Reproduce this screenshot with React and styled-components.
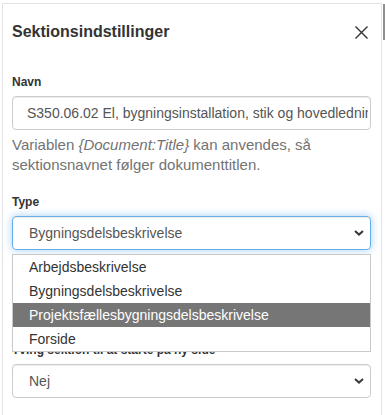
import React from "react";
import styled, { createGlobalStyle } from "styled-components";

const GlobalStyle = createGlobalStyle`
  html, body {
    margin: 0;
    padding: 0;
    background: #ffffff;
  }
  body {
    font-family: "Liberation Sans", Arial, sans-serif;
    color: #333333;
    overflow: hidden;
  }
  * {
    box-sizing: border-box;
  }
`;

const Page = styled.div`
  position: relative;
  width: 385px;
  height: 415px;
  padding: 3px 0 0 2px;
`;

const ScrollThumb = styled.div`
  position: absolute;
  left: 383px;
  top: 4px;
  width: 2px;
  height: 36px;
  background: #8f8f8f;
`;

const Panel = styled.div`
  width: 380px;
  height: 412px;
  border: 1px solid #e3e3e3;
  border-bottom: none;
  padding: 16px 9px 0 9px;
`;

const Header = styled.div`
  display: flex;
  align-items: center;
  justify-content: space-between;
  height: 24px;
`;

const Title = styled.h4`
  margin: 0;
  font-size: 16px;
  line-height: 24px;
  font-weight: 700;
  color: #333333;
`;

const CloseButton = styled.button`
  display: flex;
  align-items: center;
  justify-content: center;
  border: none;
  background: none;
  padding: 0;
  margin-right: 4px;
  width: 13px;
  height: 13px;
  cursor: pointer;
`;

const Body = styled.div`
  padding-top: 29px;
`;

const Group = styled.div`
  position: relative;
  margin-bottom: ${({ $gap }) => $gap || 15}px;
`;

const Label = styled.label`
  display: block;
  font-size: 12px;
  line-height: 18px;
  font-weight: 700;
  color: #333333;
  margin-bottom: 5px;
`;

const TextInput = styled.input`
  display: block;
  width: 359px;
  height: 34px;
  padding: 0 2px 0 14px;
  font-family: "Liberation Sans", Arial, sans-serif;
  font-size: 14px;
  color: #555555;
  border: 1px solid #cccccc;
  border-radius: 4px;
  outline: none;
  box-shadow: inset 0 1px 1px rgba(0, 0, 0, 0.075);
`;

const HelpText = styled.p`
  margin: 5px 0 0;
  font-size: 15px;
  line-height: 20px;
  color: #737373;
`;

const SelectBox = styled.div`
  display: flex;
  align-items: center;
  justify-content: space-between;
  width: 359px;
  height: 34px;
  padding: 0 6px 0 16px;
  font-size: 14px;
  color: #555555;
  border: 1px solid ${({ $focused }) => ($focused ? "#66afe9" : "#cccccc")};
  border-radius: 4px;
  box-shadow: ${({ $focused }) =>
    $focused
      ? "inset 0 1px 1px rgba(0,0,0,.075), 0 0 8px rgba(102,175,233,.6)"
      : "inset 0 1px 1px rgba(0,0,0,.075)"};
`;

const Options = styled.ul`
  position: absolute;
  left: 0;
  top: calc(100% + 4px);
  width: 359px;
  margin: 0;
  padding: 0;
  list-style: none;
  background: #ffffff;
  border: 1px solid #c9c9c9;
  z-index: 2;
`;

const Option = styled.li`
  height: 24px;
  line-height: 24px;
  padding-left: 16px;
  font-size: 14px;
  color: ${({ $active }) => ($active ? "#ffffff" : "#333333")};
  background: ${({ $active }) => ($active ? "#767676" : "transparent")};
`;

const Chevron = () => (
  <svg width="10" height="6" viewBox="0 0 10 6">
    <path d="M1 1l4 3.6L9 1" fill="none" stroke="#3a3a3a" strokeWidth="2" />
  </svg>
);

const types = [
  "Arbejdsbeskrivelse",
  "Bygningsdelsbeskrivelse",
  "Projektsfællesbygningsdelsbeskrivelse",
  "Forside",
];

const App = () => {
  return (
    <Page>
      <GlobalStyle />
      <ScrollThumb />
      <Panel>
        <Header>
          <Title>Sektionsindstillinger</Title>
          <CloseButton aria-label="Luk">
            <svg width="13" height="13" viewBox="0 0 13 13">
              <path
                d="M0.5 0.5L12.5 12.5M12.5 0.5L0.5 12.5"
                stroke="#333333"
                strokeWidth="1.4"
              />
            </svg>
          </CloseButton>
        </Header>
        <Body>
          <Group $gap={18}>
            <Label>Navn</Label>
            <TextInput
              readOnly
              defaultValue="S350.06.02 El, bygningsinstallation, stik og hovedledninger"
            />
            <HelpText>
              Variablen <i>{"{Document:Title}"}</i> kan anvendes, så
              sektionsnavnet følger dokumenttitlen.
            </HelpText>
          </Group>
          <Group $gap={91}>
            <Label>Type</Label>
            <SelectBox $focused>
              <span>Bygningsdelsbeskrivelse</span>
              <Chevron />
            </SelectBox>
            <Options>
              {types.map((t) => (
                <Option key={t} $active={t === "Projektsfællesbygningsdelsbeskrivelse"}>
                  {t}
                </Option>
              ))}
            </Options>
          </Group>
          <Group>
            <Label>Tving sektion til at starte på ny side</Label>
            <SelectBox>
              <span>Nej</span>
              <Chevron />
            </SelectBox>
          </Group>
        </Body>
      </Panel>
    </Page>
  );
};

export default App;
